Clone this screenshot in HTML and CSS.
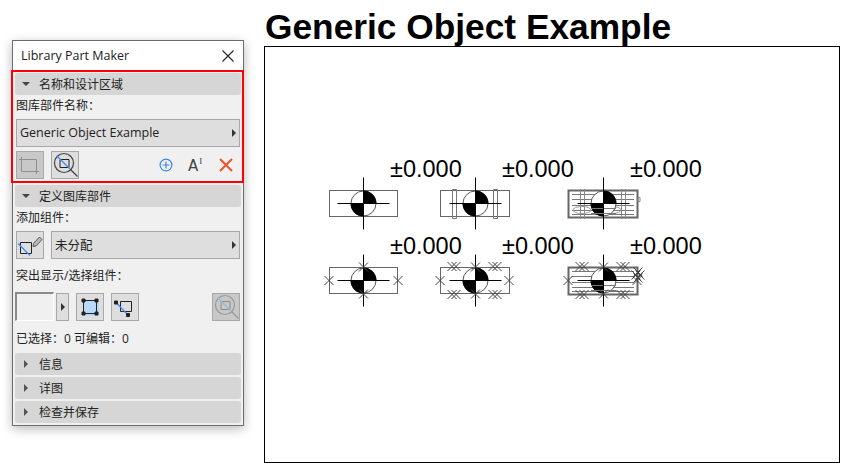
FILE: index.html
```html
<!DOCTYPE html>
<html lang="zh">
<head>
<meta charset="utf-8">
<title>Library Part Maker</title>
<link rel="stylesheet" href="styles.css">
</head>
<body>
<aside class="panel">
  <header class="titlebar">
    <span class="title">Library Part Maker</span>
    <svg class="close" width="12" height="12" viewBox="0 0 12 12"><path d="M.5.5l11 11M11.5.5l-11 11" stroke="#222" stroke-width="1.1" fill="none"/></svg>
  </header>

  <section class="highlight">
    <div class="section"><span class="tri-down"></span><span>名称和设计区域</span></div>
    <div class="label">图库部件名称：</div>
    <div class="select wide"><span class="select-text">Generic Object Example</span><span class="tri-right"></span></div>
    <div class="tools">
      <span class="btn off">
        <svg width="28" height="28" viewBox="0 0 28 28" fill="none" stroke="#8f8f8f"><path d="M5.500 8.500h15v12h-15z"/><path d="M3 8.500h5M5.500 6v5M18 20.500h5M20.500 18v5"/></svg>
      </span>
      <span class="btn">
        <svg width="28" height="28" viewBox="0 0 28 28" fill="none"><circle cx="13" cy="12" r="9.500" stroke="#444" stroke-width="1.200"/><path d="M9 8.500h9v8H9z" stroke="#222"/><path d="M6 5l13 13" stroke="#3d8bf0" stroke-width="1.200"/><path d="M19.500 18.500l7 7" stroke="#444" stroke-width="1.200"/></svg>
      </span>
      <span class="spacer"></span>
      <svg class="ic-plus" width="14" height="14" viewBox="0 0 14 14" fill="none" stroke="#3b86ea" stroke-width="1.200"><circle cx="7" cy="7" r="5.900"/><path d="M3.500 7h7M7 3.500v7"/></svg>
      <span class="ic-text"><span class="ic-a">A</span><span class="ic-cursor">I</span></span>
      <svg class="ic-x" width="14" height="14" viewBox="0 0 14 14" fill="none" stroke="#f0502a" stroke-width="2"><path d="M1 1l12 12M13 1L1 13"/></svg>
    </div>
  </section>

  <section class="define">
    <div class="section"><span class="tri-down"></span><span>定义图库部件</span></div>
    <div class="label">添加组件：</div>
    <div class="row">
      <span class="btn">
        <svg width="28" height="28" viewBox="0 0 28 28" fill="none"><path d="M4.500 11.500h11v11h-11z" stroke="#222"/><path d="M2 12.500l12 12" stroke="#3d8bf0" stroke-width="1.200"/><path d="M17.500 12.500l6-6.500 2.500 2.500-6 6.500-3 .5z" stroke="#555" fill="#bbb"/></svg>
      </span>
      <div class="select grow"><span class="select-text">未分配</span><span class="tri-right"></span></div>
    </div>
    <div class="label gap-top">突出显示/选择组件：</div>
    <div class="row picks">
      <span class="swatch"></span>
      <span class="btn narrow"><span class="tri-right"></span></span>
      <span class="btn space-l">
        <svg width="28" height="28" viewBox="0 0 28 28" fill="none"><rect x="8" y="8" width="15" height="15" fill="#b9d8fb" stroke="none"/><path d="M7.500 7.500h13v13h-13z" stroke="#222"/><path d="M6 6h3v3H6zM19 6h3v3h-3zM6 19h3v3H6zM19 19h3v3h-3z" fill="#222" stroke="#222"/></svg>
      </span>
      <span class="btn">
        <svg width="28" height="28" viewBox="0 0 28 28" fill="none"><path d="M9.500 8.500h11v10h-11z" stroke="#222"/><path d="M5 9.500L17 22" stroke="#3d8bf0" stroke-width="1.200"/><path d="M3.500 8h3v3h-3zM15.500 20.500h3v3h-3z" fill="#222" stroke="#222"/></svg>
      </span>
      <span class="spacer"></span>
      <span class="btn off">
        <svg width="28" height="28" viewBox="0 0 28 28" fill="none"><circle cx="13" cy="12" r="9.500" stroke="#9a9a9a" stroke-width="1.200"/><path d="M9 8.500h9v8H9z" stroke="#8a8a8a"/><path d="M6 5l13 13" stroke="#96b8e0" stroke-width="1.200"/><path d="M19.500 18.500l7 7" stroke="#9a9a9a" stroke-width="1.200"/></svg>
      </span>
    </div>
    <div class="label count">已选择：0 可编辑：0</div>
    <div class="section"><span class="tri-right dark"></span><span>信息</span></div>
    <div class="section"><span class="tri-right dark"></span><span>详图</span></div>
    <div class="section"><span class="tri-right dark"></span><span>检查并保存</span></div>
  </section>
</aside>

<main class="main">
  <h1 class="heading">Generic Object Example</h1>
  <div class="canvas">
    <svg class="drawing" width="574" height="415" viewBox="265 47 574 415">
      <defs>
        <g id="marker">
          <circle r="12.500" fill="#fff" stroke="#555"/>
          <path d="M0 0V-13A13 13 0 0 1 13 0zM0 0V13A13 13 0 0 1 -13 0z" fill="#000"/>
          <path d="M0-26V26M-26 0H26" stroke="#000" fill="none"/>
        </g>
        <path id="x" d="M-4.500-4.500l9 9M4.500-4.500l-9 9" stroke="#444" fill="none"/>
        <g id="xx"><use href="#x" x="-2"/><use href="#x" x="2"/></g>
        <g id="strips" fill="none" stroke="#777">
          <path d="M452.500 189.500h4v29h-4zM493.500 189.500h4v29h-4z"/>
        </g>
        <g id="dense" fill="none" stroke="#666">
          <path d="M568.500 190.500h69v27h-69z" stroke-width="2"/>
          <path d="M572 194.500h62M572 199.500h62M572 205.500h62M572 210.500h62M572 214.500h62" stroke="#777"/>
        </g>
      </defs>

      <g class="level">
        <text x="390" y="177">±0.000</text>
        <text x="502" y="177">±0.000</text>
        <text x="630" y="177">±0.000</text>
        <text x="390" y="254">±0.000</text>
        <text x="502" y="254">±0.000</text>
        <text x="630" y="254">±0.000</text>
      </g>

      <rect x="329.500" y="190.500" width="68" height="26" fill="none" stroke="#666"/>
      <use href="#marker" x="363.500" y="203.500"/>

      <rect x="440.500" y="190.500" width="69" height="26" fill="none" stroke="#666"/>
      <use href="#strips"/>
      <use href="#marker" x="475.500" y="203.500"/>

      <use href="#dense"/>
      <path d="M580.500 189v30M584.500 189v30M621.500 189v30M625.500 189v30M638 197.500h2v4h-2z" fill="none" stroke="#888"/>
      <ellipse cx="582" cy="210" rx="9" ry="3.500" fill="none" stroke="#999"/>
      <ellipse cx="612" cy="210" rx="9" ry="3.500" fill="none" stroke="#999"/>
      <use href="#marker" x="603.500" y="203.500"/>
      <path d="M591 208.500h12M604 208.500h12M591 213.500h25" stroke="#777" fill="none"/>

      <rect x="329.500" y="267.500" width="68" height="26" fill="none" stroke="#666"/>
      <use href="#marker" x="363.500" y="280.500"/>
      <use href="#x" x="329" y="280.500"/><use href="#x" x="398" y="280.500"/><use href="#x" x="363.500" y="267"/><use href="#x" x="363.500" y="294"/>

      <rect x="440.500" y="267.500" width="69" height="26" fill="none" stroke="#666"/>
      <use href="#marker" x="475.500" y="280.500"/>
      <use href="#x" x="440" y="280.500"/><use href="#x" x="509" y="280.500"/><use href="#x" x="475.500" y="267"/><use href="#x" x="475.500" y="294"/>
      <use href="#xx" x="454" y="266.500"/><use href="#xx" x="495" y="266.500"/><use href="#xx" x="454" y="294.500"/><use href="#xx" x="495" y="294.500"/>

      <use href="#dense" y="77"/>
      <use href="#marker" x="603.500" y="280.500"/>
      <path d="M591 285.500h12M604 285.500h12M591 290.500h25" stroke="#777" fill="none"/>
      <use href="#x" x="568" y="280.500"/><use href="#x" x="637" y="280.500"/><use href="#x" x="603.500" y="267"/><use href="#x" x="603.500" y="294"/>
      <use href="#xx" x="582" y="266.500"/><use href="#xx" x="623" y="266.500"/><use href="#xx" x="582" y="294.500"/><use href="#xx" x="623" y="294.500"/>
      <use href="#xx" x="638" y="275"/><use href="#x" x="638" y="272"/><use href="#x" x="638" y="278"/>
    </svg>
  </div>
</main>
</body>
</html>
```
FILE: styles.css
```css
* { box-sizing: border-box; }
html, body { margin: 0; padding: 0; }
body {
  display: flex;
  align-items: flex-start;
  width: 850px;
  height: 472px;
  background: #fff;
  overflow: hidden;
  font-family: "Open Sans", "Noto Sans CJK SC", sans-serif;
  color: #222;
}

.panel {
  width: 232px;
  height: 386px;
  margin: 40px 0 0 12px;
  background: #f0f0f0;
  border: 1px solid #6c6c6c;
  box-shadow: 0 3px 10px rgba(0,0,0,.28);
  flex: none;
}
.titlebar {
  height: 29px;
  background: #fff;
  display: flex;
  align-items: center;
  justify-content: space-between;
  padding: 0 9px 0 8px;
}
.title { font-size: 12.500px; }

.highlight {
  margin: 0 -1px 0 -2px;
  height: 113px;
  border: 2px solid #f00;
  padding: 1px 1px 0 2px;
  position: relative;
}
.define { padding: 2px 2px 0 2px; }

.section {
  height: 22px;
  background: #d6d6d6;
  border-radius: 3px;
  display: flex;
  align-items: center;
  font-size: 12px;
  padding-left: 7px;
  margin-bottom: 0;
}
.define .section ~ .section { margin-top: 2px; }
.define .count + .section { margin-top: 3px; }

.tri-down {
  width: 0;
  height: 0;
  border-left: 4px solid transparent;
  border-right: 4px solid transparent;
  border-top: 4px solid #444;
  margin-right: 9px;
  flex: none;
}
.tri-right {
  width: 0;
  height: 0;
  border-top: 4.500px solid transparent;
  border-bottom: 4.500px solid transparent;
  border-left: 4px solid #333;
  flex: none;
}
.tri-right.dark { margin: 0 11px 0 2px; border-left-color: #555; }

.label {
  height: 22px;
  line-height: 22px;
  font-size: 12px;
  padding-left: 1px;
  white-space: nowrap;
}
.gap-top { margin-top: 6px; }
.count { margin-top: 7px; }

.select {
  height: 28px;
  background: #dedede;
  border: 1px solid #a8a8a8;
  display: flex;
  align-items: center;
  justify-content: space-between;
  padding: 0 3px;
  font-size: 12.500px;
}
.select-text { position: relative; top: -1px; }
.select.wide { margin: 2px 1px 0 1px; }
.select.grow { flex: 1; margin-left: 7px; }

.tools {
  display: flex;
  align-items: center;
  height: 28px;
  margin: 4px 1px 0 1px;
}
.row {
  display: flex;
  align-items: center;
  height: 28px;
  margin: 2px 1px 0 1px;
}
.picks { height: 29px; margin: 5px 1px 0 0; }

.btn {
  width: 28px;
  height: 28px;
  background: #dedede;
  border: 1px solid #a8a8a8;
  display: flex;
  align-items: center;
  justify-content: center;
  flex: none;
}
.btn svg { margin: -1px; flex: none; }
.tools .btn + .btn { margin-left: 7px; }
.picks .btn + .btn { margin-left: 7px; }
.picks .btn.narrow + .btn { margin-left: 7px; }
.btn.off { background: #c8c8c8; }
.btn.narrow { width: 13px; margin-left: 2px; }
.swatch {
  width: 39px;
  height: 29px;
  background: #f0f0f0;
  border: 1px solid #fff;
  border-top: 2px solid #8a8a8a;
  border-left: 2px solid #8a8a8a;
  flex: none;
}
.spacer { flex: 1; }

.ic-plus { margin-right: 15px; }
.ic-text {
  display: flex;
  align-items: flex-start;
  width: 18px;
  margin-right: 13px;
  height: 18px;
  font-family: "DejaVu Sans", sans-serif;
  color: #444;
}
.ic-a { font-size: 15px; line-height: 21px; }
.ic-cursor { font-size: 9px; line-height: 10px; font-family: "Liberation Serif", serif; margin-left: 1px; }
.ic-x { margin-right: 7px; }

.main { margin-left: 20px; flex: none; }
.heading {
  margin: 10px 0 0;
  height: 36px;
  padding-left: 1px;
  font: 700 35.300px/34px "Liberation Sans", Arial, sans-serif;
  color: #000;
  white-space: nowrap;
}
.canvas {
  width: 576px;
  height: 417px;
  border: 1px solid #000;
  background: #fff;
}
.drawing { display: block; }
.level text { font: 23.500px "Liberation Sans", Arial, sans-serif; fill: #000; }
```
